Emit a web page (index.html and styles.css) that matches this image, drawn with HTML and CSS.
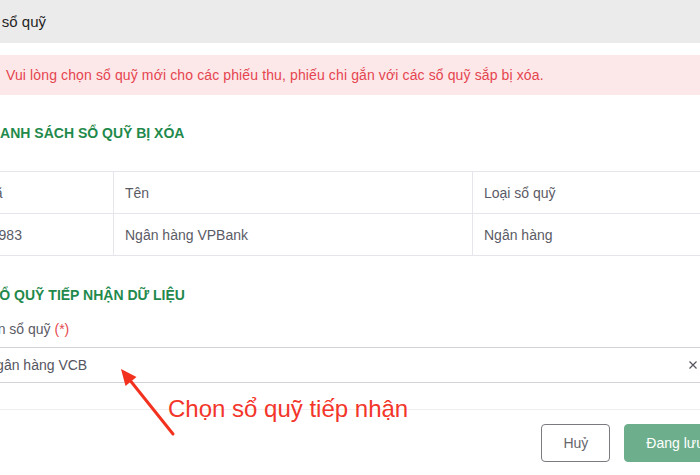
FILE: index.html
```html
<!DOCTYPE html>
<html lang="vi">
<head>
  <meta charset="UTF-8" />
  <meta name="viewport" content="width=device-width, initial-scale=1.0"/>
  <title>Xóa sổ quỹ</title>
  <link rel="stylesheet" href="styles.css">
</head>
<body>

  <div class="page">
    <div class="modal">
      <div class="modal-header">Xóa sổ quỹ</div>

      <div class="modal-body">
        <div class="alert">Vui lòng chọn sổ quỹ mới cho các phiếu thu, phiếu chi gắn với các sổ quỹ sắp bị xóa.</div>

        <h3 class="section-title">DANH SÁCH SỔ QUỸ BỊ XÓA</h3>
        <table class="list">
          <tr>
            <td class="col-code">Mã</td>
            <td class="col-name">Tên</td>
            <td>Loại sổ quỹ</td>
          </tr>
          <tr>
            <td class="col-code">00983</td>
            <td class="col-name">Ngân hàng VPBank</td>
            <td>Ngân hàng</td>
          </tr>
        </table>

        <h3 class="section-title second">SỔ QUỸ TIẾP NHẬN DỮ LIỆU</h3>
        <div class="field">
          <label class="field-label">Chọn sổ quỹ <span class="req">(*)</span></label>
          <div class="select">
            <span class="select-value">Ngân hàng VCB</span>
            <svg class="clear" width="8" height="8" viewBox="0 0 8 8">
              <path d="M0.5 0.5 L7.5 7.5 M7.5 0.5 L0.5 7.5" stroke="#55555f" stroke-width="1.2" fill="none"/>
            </svg>
          </div>
        </div>
      </div>

      <div class="modal-footer">
        <button class="btn btn-cancel">Huỷ</button>
        <button class="btn btn-save">Đang lưu</button>
      </div>
    </div>

    <!-- chú thích hướng dẫn -->
    <svg class="note-arrow" width="75" height="85" viewBox="0 0 75 85">
      <line x1="63" y1="74" x2="21" y2="21.5" stroke="#f2321f" stroke-width="3" stroke-linecap="round"/>
      <polygon points="11,9 26.5,17.1 15.5,25.9" fill="#f2321f"/>
    </svg>
    <div class="note-text">Chọn sổ quỹ tiếp nhận</div>
  </div>

</body>
</html>
```

FILE: styles.css
```css
html, body {
  margin: 0;
  padding: 0;
  background: #fff;
  overflow: hidden;
}

body {
  font-family: "Liberation Sans", Arial, sans-serif;
  font-size: 14px;
  color: #5b5b66;
}

.page {
  position: relative;
  width: 700px;
  height: 475px;
  overflow: hidden;
}

.modal {
  width: 786px;
  margin-left: -44px;
}

.modal-header {
  height: 43px;
  line-height: 43px;
  padding: 0 15px;
  background-color: #ebebeb;
  font-size: 15px;
  color: #1f1f1f;
}

.modal-body {
  padding: 12px 16px 0;
}

.alert {
  padding: 10px 16px 10px 34px;
  line-height: 20px;
  letter-spacing: 0.12px;
  background-color: #fce8e9;
  color: #e5444f;
}

.section-title {
  margin: 28px 0 0;
  padding-left: 18px;
  font-size: 14px;
  line-height: 20px;
  font-weight: bold;
  color: #1f8a4c;
}

.section-title.second {
  margin-top: 29px;
}

.list {
  width: 100%;
  margin-top: 28px;
  border-collapse: collapse;
}

.list td {
  height: 41px;
  padding: 0 11px;
  border-top: 1px solid #e5e5eb;
  border-bottom: 1px solid #e5e5eb;
  line-height: 20px;
}

.list td + td {
  border-left: 1px solid #e5e5eb;
}

.list .col-code {
  width: 119px;
}

.list .col-name {
  width: 336px;
}

.field {
  margin-top: 14px;
}

.field-label {
  display: block;
  line-height: 20px;
  color: #5b5b66;
}

.req {
  color: #e5484d;
}

.select {
  display: flex;
  align-items: center;
  height: 34px;
  margin-top: 8px;
  padding: 0 28px 0 13px;
  border: 1px solid #d2d2d9;
  border-radius: 3px;
}

.select-value {
  flex: 1;
  color: #55555f;
}

.clear {
  display: block;
}

.modal-footer {
  display: flex;
  justify-content: flex-end;
  gap: 14px;
  margin-top: 26px;
  padding: 14px 16px;
  border-top: 1px solid #eeeeee;
}

.btn {
  height: 38px;
  padding: 0 21px;
  font-family: inherit;
  font-size: 14px;
  border-radius: 4px;
  cursor: pointer;
}

.btn-cancel {
  background: #fff;
  border: 1px solid #7a7a7f;
  color: #66666c;
}

.btn-save {
  background-color: #6daf8c;
  border: 1px solid #6daf8c;
  color: #fff;
}

.note-arrow {
  position: absolute;
  left: 110px;
  top: 360px;
}

.note-text {
  position: absolute;
  left: 168px;
  top: 395px;
  font-size: 24px;
  line-height: 28px;
  color: #f3352a;
  white-space: nowrap;
}
```
